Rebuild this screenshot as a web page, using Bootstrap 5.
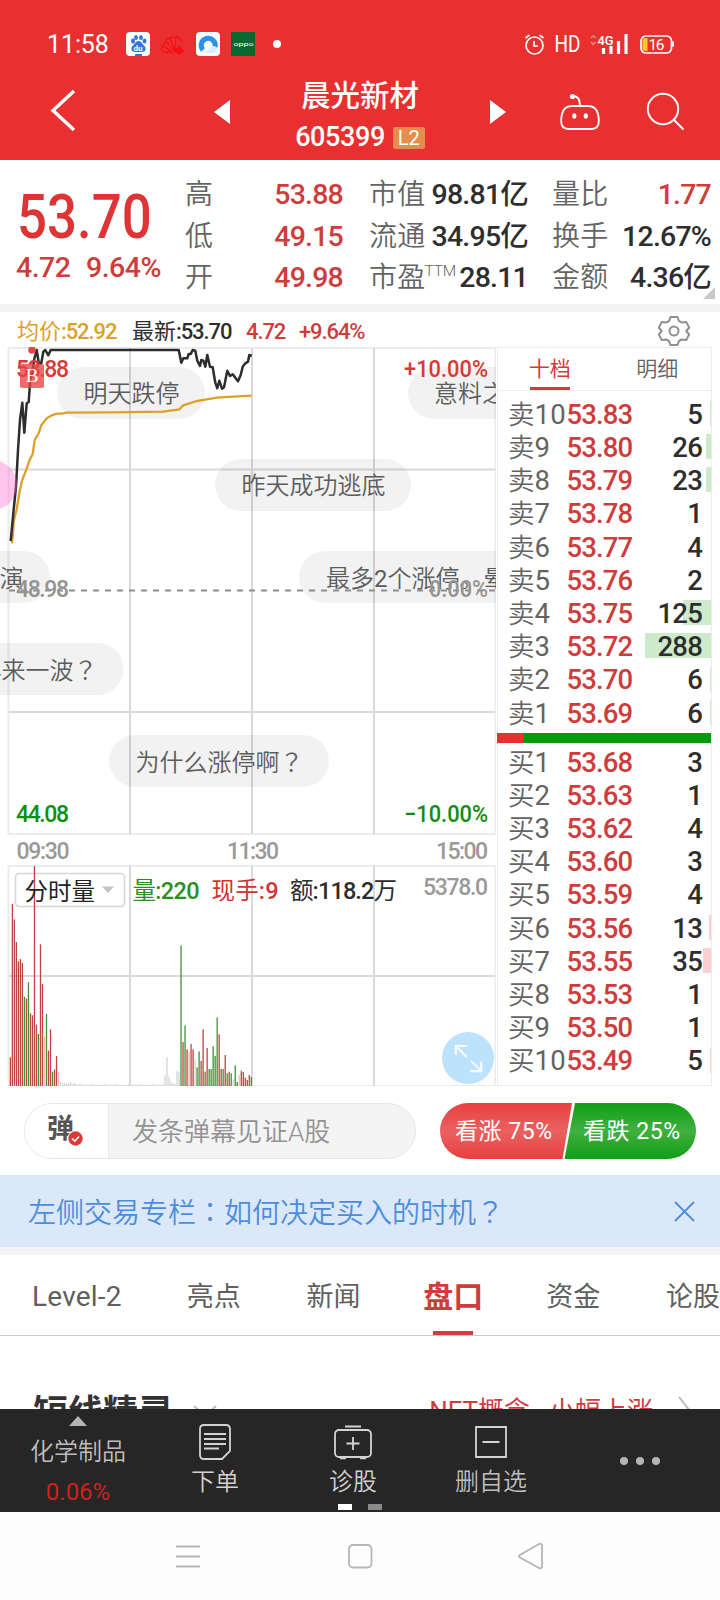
<!DOCTYPE html>
<html lang="zh-CN">
<head>
<meta charset="utf-8">
<meta name="viewport" content="width=device-width, initial-scale=1">
<title>晨光新材 605399</title>
<link rel="stylesheet" href="https://cdn.jsdelivr.net/npm/bootstrap@5.3.0/dist/css/bootstrap.min.css">
<style>
:root{--up:#cf3c3c;--ink:#2e2e2e;--dim:#636363;}
body{width:720px;height:1600px;overflow:hidden;background:#fff;color:var(--ink);font-family:Roboto,"Noto Sans CJK SC",sans-serif;line-height:1;white-space:nowrap}
svg{display:block;flex:none}
.up{color:var(--up)} .dim{color:var(--dim)}
.punct{font-family:"Noto Sans CJK TC",sans-serif}
.topbar{height:160px;background:#e83030;color:#fff}
.statusbar{height:88px;padding:0 45px 0 47px}
.clock{font-size:25px;font-weight:400;width:79px;letter-spacing:-.1px}
.titlebar{height:72px}
.stock-name{font-size:29.5px;font-weight:500;line-height:32px}
.stock-code{font-size:27px;font-weight:500;letter-spacing:-.4px}
.tag-l2{background:#e58d4c;width:32px;height:22px;font-size:20px;border-radius:2px;line-height:23px;text-align:center}
.quote{height:144px;padding:14px 9px 6px 17px}
.last-price{font-size:61px;font-weight:500;transform:scaleX(.865);transform-origin:left;color:#dd3535;height:56px;line-height:60px;margin:13px 0 0 0}
.delta{font-size:28.5px;letter-spacing:-.5px;font-weight:500;height:40px;line-height:40px;margin:5px 0 0 -1px}
.qcol{height:124px}
.qcol>div{height:41.7px;font-size:28.5px;line-height:41.7px;font-weight:500;letter-spacing:-.8px}
.qcol .dim{font-weight:350;letter-spacing:.3px;font-size:28px}
.qcol .ttm{font-size:15.500px;font-weight:300;line-height:16px;letter-spacing:-.3px;margin:6px auto 0 -1px}
.band{height:8px;background:#f4f4f4}
.avg{height:35px;padding:4px 30px 0 17px;font-size:22px;font-weight:500;letter-spacing:-1.1px}
.avg .cj{font-weight:400;letter-spacing:0}
.board{height:739px}
.orders{width:215px;margin-left:1px;border:1px solid #ececec}
.otabs{height:43px;font-size:21px;border-bottom:1px solid #ececec;font-weight:350}
.otabs>div{flex:1;text-align:center;line-height:43px}
.otabs .on{color:var(--up);font-weight:400}
.otabs .on::after{content:"";display:block;width:40px;height:3px;margin:-4px auto 0;background:var(--up)}
.orow{height:33.2px;padding:2px 9px 0 10px;font-size:27.5px}
.orow .lb{width:58.5px;color:var(--dim);font-weight:400;letter-spacing:.1px}
.orow .lb i{font-style:normal;font-size:26.500px;font-weight:350}
.orow .pr{color:var(--up);font-weight:500;letter-spacing:-.9px}
.orow .qt{font-weight:500;letter-spacing:-.8px}
.balance{height:10px;margin:4px 0 2px -1px}
.talk{height:89px;padding:17px 23px 0 24px}
.pill{width:392px;height:56px;border:1px solid #e8e8e8;border-radius:28px;background:#f4f4f4;overflow:hidden}
.pill .dan{width:84px;background:#fff;border-right:1px solid #e8e8e8;padding-left:22px;font-size:27px;font-weight:700;color:#555}
.pill .ph{font-size:26px;font-weight:350;color:#929292;padding:2px 0 0 23px}
.vote{width:257px;height:56px;color:#fff;font-size:22.5px}
.notice{height:72px;background:#dbe8fa;color:#4b8ddd;font-size:28px;font-weight:350;padding:0 25px 0 28px}
.tabs{height:81px;border-bottom:1px solid #c9c9c9;font-size:27px;color:#606060;padding-left:32px;overflow:hidden}
.tabs>div{line-height:84px}
.tabs .on{font-size:30px;font-weight:700;color:var(--up)}
.tabs .on::after{content:"";display:block;width:40px;height:4px;margin:-8px auto 0;background:var(--up)}
.spirit{height:73px;overflow:hidden;padding:52px 25px 0 33px}
.spirit h2{font-size:35px;font-weight:700;line-height:40px;margin:6px 0 0;color:#333}
.spirit .more{font-size:26px;line-height:44px;margin-top:1px;color:var(--up)}
.dock{height:103px;background:#262626;color:#bdbdbd;font-size:24px;font-weight:350;overflow:hidden}
.dock .cell{width:138px;height:103px;flex:none}
.sysnav{height:88px;background:#fdfdfd}
</style>
</head>
<body>
<header class="topbar">
  <div class="statusbar d-flex align-items-center">
    <span class="clock">11:58</span>
    <svg width="165" height="30" viewBox="126 29 165 30">
      <rect x="126" y="32" width="24" height="24" rx="4" fill="#fff"/>
      <g fill="#3274dc"><ellipse cx="133" cy="41" rx="2" ry="2.7"/><ellipse cx="136" cy="37.500" rx="1.900" ry="2.500"/><ellipse cx="141" cy="37.500" rx="1.900" ry="2.500"/><ellipse cx="144.500" cy="41" rx="2" ry="2.600"/><path d="M138.500 41c3 0 3.500 3 6 5 2.500 3 .5 6-2.500 6h-7c-3 0-5-3-2.500-6 2.500-2 3-5 6-5z"/><path d="M135 54h7v2h-7z"/></g>
      <text x="133.500" y="50.500" font-size="8" font-weight="700" fill="#fff">du</text>
      <g fill="none" stroke="#fa0d12" stroke-width="1.200"><path d="M168 53c-8-1-8-6-4-8 2-9 15-11 18-3M163 46l10 7M166 41l8 10M170 38l5 13M176 37l-1 13M164 52h8"/></g>
      <path d="M179.500 45c1 3 4.500 4 4 7-.5 2-3 1.500-3.500.5l1 2h-4l1-2c-1 1-3.500 1-3.500-1 0-3 4-4 5-6.500z" fill="#fa0d12"/>
      <rect x="196" y="32" width="24" height="24" rx="4" fill="#f7fafc"/>
      <path d="M203 50a7 7 0 1 1 12-3" fill="none" stroke="#2b91e8" stroke-width="5"/>
      <path d="M204 53c4 0 5-7 9-7 5 0 6 7 1 7z" fill="#dbeefb"/>
      <rect x="231" y="32" width="24" height="24" fill="#08692e"/>
      <text x="233.500" y="45.500" font-size="5.800" textLength="20" lengthAdjust="spacingAndGlyphs" fill="#fff">oppo</text>
      <circle cx="277" cy="44" r="4" fill="#fff"/>
    </svg>
    <svg class="ms-auto" width="152" height="30" viewBox="523 29 152 30" fill="none" stroke="#fff" stroke-width="1.700">
      <circle cx="534.500" cy="45.500" r="8.500"/><path d="M534 41v5h4M525.500 38l4-3M543.500 38l-4-3"/>
      <text x="554.500" y="52" font-size="23" font-weight="400" textLength="26" lengthAdjust="spacingAndGlyphs" fill="#fff" stroke="none">HD</text>
      <path d="M591 38l2.300-2.300 2.300 2.300M591 42l2.300 2.300 2.300-2.300" stroke="#f18080"/>
      <text x="597.500" y="45" font-size="13" font-weight="500" textLength="16" lengthAdjust="spacingAndGlyphs" fill="#fff" stroke="none">4G</text>
      <path d="M603.500 48v6M611 46v8M618.500 41v13M626 34v20" stroke-width="3.200"/>
      <rect x="641" y="36" width="30.500" height="17" rx="5"/><path d="M673 41.500v5" stroke-width="2"/>
      <path d="M647.500 38h-2q-3 0-3 3v7q0 3 3 3h2z" fill="#ffc928" stroke="none"/>
      <text x="648.500" y="49.500" font-size="15.500" textLength="16" fill="#fff" stroke="none">16</text>
    </svg>
  </div>
  <div class="titlebar d-flex">
    <svg width="290" height="72" viewBox="0 88 290 72"><path d="M74 91L53 110.500l21 19.500" fill="none" stroke="#fff" stroke-width="3.400"/><path d="M214 112l16-12v24z" fill="#fff"/></svg>
    <div class="d-flex flex-column align-items-center" style="width:140px;margin-top:-8px">
      <div class="stock-name">晨光新材</div>
      <div class="d-flex align-items-center gap-2 mt-2 pt-1"><span class="stock-code">605399</span><span class="tag-l2">L2</span></div>
    </div>
    <svg width="290" height="72" viewBox="430 88 290 72" fill="none" stroke="#fff" stroke-width="1.900">
      <path d="M506 112l-16-12v24z" fill="#fff" stroke="none"/>
      <path d="M572 106h16q8 0 10 8 1.500 6 .5 10-1.500 5-7 5h-23q-5.500 0-7-5-1-4 .5-10 2-8 10-8z"/><path d="M573 96c5 0 7 3 7 10"/>
      <circle cx="572.500" cy="96.500" r="2.600" fill="#fff" stroke="none"/><ellipse cx="574.300" cy="116" rx="2.100" ry="2.800" fill="#fff" stroke="none"/><ellipse cx="585.800" cy="116" rx="2.100" ry="2.800" fill="#fff" stroke="none"/>
      <circle cx="663" cy="109" r="15.200"/><path d="M674 120l9.500 9.500"/>
    </svg>
  </div>
</header>

<section class="quote d-flex position-relative">
  <div style="width:168px">
    <div class="last-price">53.70</div>
    <div class="delta up d-flex"><span style="width:70px">4.72</span><span>9.64%</span></div>
  </div>
  <div class="qcol" style="width:158px">
    <div class="d-flex justify-content-between up"><span class="dim">高</span>53.88</div>
    <div class="d-flex justify-content-between up"><span class="dim">低</span>49.15</div>
    <div class="d-flex justify-content-between up"><span class="dim">开</span>49.98</div>
  </div>
  <div class="qcol" style="width:159px;margin-left:26px">
    <div class="d-flex justify-content-between"><span class="dim">市值</span>98.81亿</div>
    <div class="d-flex justify-content-between"><span class="dim">流通</span>34.95亿</div>
    <div class="d-flex justify-content-between"><span class="dim">市盈</span><span class="dim ttm">TTM</span>28.11</div>
  </div>
  <div class="qcol" style="width:159px;margin-left:24px">
    <div class="d-flex justify-content-between up"><span class="dim">量比</span>1.77</div>
    <div class="d-flex justify-content-between"><span class="dim">换手</span>12.67%</div>
    <div class="d-flex justify-content-between"><span class="dim">金额</span>4.36亿</div>
  </div>
  <svg class="position-absolute" style="right:5px;bottom:5px" width="12" height="12"><path d="M12 0v12H0z" fill="#c8c8c8"/></svg>
</section>
<div class="band"></div>

<div class="avg d-flex align-items-center">
  <span style="width:115px;color:#dda126"><span class="cj">均价</span>:52.92</span>
  <span style="width:114px"><span class="cj">最新</span>:53.70</span>
  <span class="up" style="width:53px">4.72</span><span class="up">+9.64%</span>
  <svg class="ms-auto" width="32" height="32" viewBox="-16 -15 32 32" fill="none" stroke="#8f8f8f" stroke-width="2" stroke-linejoin="round"><circle r="4.500"/><path d="M-3.500-14h7l1.500 4 3 1.600 4.200-.7 3 5.600L12.300 0l2.900 3.500-3 5.600-4.200-.7L5 10l-1.500 4h-7L-5 10l-3-1.600-4.200.7-3-5.600L-12.300 0l-2.900-3.500 3-5.600 4.200.7L-5-10z"/></svg>
</div>

<div class="board d-flex">
  <svg width="496" height="739" viewBox="0 347 496 739" font-weight="500">
    <g fill="none" stroke="#ececec" stroke-width="2"><rect x="8.500" y="348" width="487" height="486"/><rect x="8.500" y="866" width="487" height="220"/></g>
    <path d="M130 348v486M252 348v486M374 348v486M9 469.500h486M9 712h486M130 866v220M252 866v220M374 866v220M9 976h486" stroke="#d9d9d9" stroke-width="2"/>
    <g fill="#000" fill-opacity=".052">
      <rect x="57" y="367" width="148" height="52" rx="26"/><rect x="408" y="367" width="148" height="52" rx="26"/>
      <rect x="215" y="459" width="196" height="52" rx="26"/><rect x="299" y="551" width="260" height="52" rx="26"/>
      <rect x="-60" y="551" width="110" height="52" rx="26"/><rect x="-60" y="643" width="183.500" height="52" rx="26"/>
      <rect x="109" y="735" width="220" height="52" rx="26"/>
    </g>
    <path d="M9 590.500h487" stroke="#8d8d8d" stroke-width="1.800" stroke-dasharray="6 6"/>
    <path id="avgLine" fill="none" stroke="#dba12a" stroke-width="2.300"/>
    <path id="priceLine" fill="none" stroke="#2d2d2d" stroke-width="2.500" stroke-linejoin="round"/>
    <circle cx="-8" cy="485" r="25" fill="#f6c" fill-opacity=".38"/>
    <g font-size="24" font-weight="350" fill="#5c5c5c">
      <text x="83.500" y="402">明天跌停</text><text x="434" y="402">意料之中</text><text x="241.500" y="494">昨天成功逃底</text>
      <text x="326" y="586.500">最多<tspan font-weight="400">2</tspan>个涨停。晕</text><text x="23.500" y="586.500" text-anchor="end">表演</text><text x="97.500" y="678.500" text-anchor="end">再来一波<tspan class="punct" lang="zh-TW">？</tspan></text><text x="135.500" y="770.500">为什么涨停啊<tspan class="punct" lang="zh-TW">？</tspan></text>
    </g>
    <g font-size="23">
      <g fill="#d83a3a"><text x="16" y="377" textLength="53">53.88</text><text x="404" y="377" textLength="84" lengthAdjust="spacingAndGlyphs">+10.00%</text></g>
      <g fill="#949494"><text x="16" y="597" textLength="53">48.98</text><text x="429" y="597" textLength="59" lengthAdjust="spacingAndGlyphs">0.00%</text></g>
      <g fill="#0f8f12"><text x="16" y="822" textLength="53">44.08</text><text x="404" y="822" textLength="84" lengthAdjust="spacingAndGlyphs">−10.00%</text></g>
      <g fill="#999"><text x="16.500" y="859" textLength="53">09:30</text><text x="227" y="859" textLength="52">11:30</text><text x="436" y="859" textLength="52">15:00</text><text x="423" y="895" textLength="65">5378.0</text></g>
    </g>
    <circle cx="32" cy="350" r="3.800" fill="#e34747"/><rect x="20" y="364" width="24" height="24" rx="2" fill="#ec4141" fill-opacity=".78"/>
    <text x="32" y="382" font-family="Liberation Serif, serif" font-size="19" font-weight="400" text-anchor="middle" fill="#fff">B</text>
    <rect x="15.500" y="873.500" width="109" height="33" rx="4" fill="#fff" stroke="#d6d6d6" stroke-width="1.600"/>
    <g id="volume"></g>
    <path d="M102 886.500h12l-6 6.500z" fill="#c4c4c4"/>
    <g font-size="23.500" font-weight="400">
      <text x="24.500" y="899.500" fill="#222">分时量</text>
      <text x="132.500" y="899" fill="#2b8f1e" textLength="67">量<tspan font-weight="500">:220</tspan></text>
      <text x="211.500" y="899" fill="#d03434" textLength="67">现手<tspan font-weight="500">:9</tspan></text>
      <text x="290" y="899" fill="#2d2d2d" textLength="107">额<tspan font-weight="500">:118.2</tspan>万</text>
    </g>
    <circle cx="468" cy="1058" r="26" fill="#bde2fe"/>
    <path d="M467 1057l-11-10.500M455.800 1055v-9h11.500M471 1061l10.500 10M470 1071.200h11.200v-9.500" fill="none" stroke="#fff" stroke-opacity=".85" stroke-width="2.200"/>
  </svg>
  <div class="orders">
    <div class="otabs d-flex"><div class="on" style="margin-left:-2px">十档</div><div class="dim">明细</div></div>
    <div id="asks" style="padding-top:6px"></div>
    <div class="balance d-flex"><div style="width:27px;background:#e83030"></div><div class="flex-fill" style="background:#069a0a"></div></div>
    <div id="bids"></div>
  </div>
</div>

<div class="talk d-flex justify-content-between">
  <div class="pill d-flex">
    <div class="dan d-flex align-items-center position-relative"><span style="margin-top:-3px">弹</span>
      <svg class="position-absolute" style="left:42px;top:26px" width="17" height="17"><circle cx="8.500" cy="8.500" r="8" fill="#fff"/><circle cx="8.500" cy="8.500" r="7.200" fill="#da3c35"/><path d="M5 8.500l2.800 2.700L12 6.500" fill="none" stroke="#fff" stroke-width="1.600"/></svg>
    </div>
    <div class="ph d-flex align-items-center">发条弹幕见证A股</div>
  </div>
  <svg class="vote" viewBox="440 1103 257 56">
    <defs><linearGradient id="r" x2="0" y2="1"><stop stop-color="#ea3f3f"/><stop offset=".5" stop-color="#ea6161"/><stop offset="1" stop-color="#ea3f3f"/></linearGradient><linearGradient id="g" x2="0" y2="1"><stop stop-color="#119e14"/><stop offset=".5" stop-color="#40b040"/><stop offset="1" stop-color="#119e14"/></linearGradient></defs>
    <path d="M468 1103h104l-9.500 56H468a28 28 0 0 1 0-56z" fill="url(#r)"/><path d="M575 1103h93a28 28 0 0 1 0 56H564.500z" fill="url(#g)"/>
    <g fill="#fff"><text x="455" y="1139" font-size="23" textLength="97">看涨 75%</text><text x="583" y="1139" font-size="23" textLength="97">看跌 25%</text></g>
  </svg>
</div>

<div class="notice d-flex align-items-center justify-content-between">
  <span style="padding-top:2px">左侧交易专栏<span class="punct" lang="zh-TW">：</span>如何决定买入的时机<span class="punct" lang="zh-TW">？</span></span>
  <svg width="21" height="21" fill="none" stroke="#4b8ddd" stroke-width="1.800"><path d="M1 1l19 19M20 1L1 20"/></svg>
</div>
<div class="band"></div>
<nav class="tabs d-flex">
  <div style="width:155px;font-size:28px;letter-spacing:.2px">Level-2</div><div style="width:120px">亮点</div><div style="width:117px">新闻</div><div class="on" style="width:60px">盘口</div><div style="width:120px;margin-left:63px">资金</div><div>论股</div>
</nav>
<div class="spirit d-flex">
  <h2>短线精灵</h2>
  <svg width="24" height="14" style="margin:16px 0 0 20px" fill="none" stroke="#bbb" stroke-width="2"><path d="M1 2l11 10L23 2"/></svg>
  <span class="more ms-auto">NFT概念</span><span class="more" style="margin-left:19px;margin-right:24px">小幅上涨</span>
  <svg width="18" height="32" style="margin-top:7px" fill="none" stroke="#bbb" stroke-width="2"><path d="M2 2l11 14L2 30"/></svg>
</div>

<div class="dock d-flex position-relative">
  <div class="cell text-center" style="width:156px;padding-top:7px">
    <svg class="mx-auto" width="18" height="10"><path d="M9 0l9 10H0z" fill="#b5b5b5"/></svg>
    <div style="margin-top:14px">化学制品</div><div style="margin-top:16px;color:#d0201f;font-weight:400">0.06%</div>
  </div>
  <div class="cell text-center" style="width:118px;padding-top:14px">
    <svg class="mx-auto" width="34" height="38" fill="none" stroke="#d3d3d3" stroke-width="1.800"><path d="M6 2h22q4 0 4 4v22l-8 8H6q-4 0-4-4V6q0-4 4-4zM6 11h22M6 16h22M6 21h22M6 25.500h15"/></svg>
    <div style="margin-top:9px;color:#d0d0d0">下单</div>
  </div>
  <div class="cell text-center" style="width:158px;padding-top:14px">
    <svg class="mx-auto" width="40" height="38" fill="none" stroke="#d3d3d3" stroke-width="1.800"><rect x="2" y="7" width="36" height="27" rx="4"/><path d="M12 3.500h16M20 14v13M13.500 20.500h13"/><path d="M7 35h6M27 35h6" stroke-width="2.600"/></svg>
    <div style="margin-top:9px;color:#d0d0d0">诊股</div>
  </div>
  <div class="cell text-center" style="width:118px;padding-top:14px">
    <svg class="mx-auto" width="34" height="38" fill="none" stroke="#d3d3d3" stroke-width="1.800"><path d="M2 4h30v30H2zM8.500 19h17"/></svg>
    <div style="margin-top:9px">删自选</div>
  </div>
  <div class="cell d-flex align-items-center ps-5" style="width:170px"><svg width="84" height="8" viewBox="-22 0 84 8" fill="#b5b5b5"><circle cx="4" cy="4" r="4"/><circle cx="20" cy="4" r="4"/><circle cx="36" cy="4" r="4"/></svg></div>
  <svg class="position-absolute" style="left:338px;bottom:2px" width="44" height="6"><path d="M0 0h14v6H0z" fill="#fff"/><path d="M30 0h14v6H30z" fill="#8b8b8b"/></svg>
</div>
<div class="sysnav">
  <svg width="720" height="88" viewBox="0 1512 720 88" fill="none" stroke="#b5b5b5" stroke-width="1.800"><path d="M176 1546.500h24M176 1556.500h24M176 1566.500h24"/><rect x="349" y="1545" width="22.500" height="22.500" rx="4"/><path d="M520 1555l19-11q3-1 3 2v20q0 3-3 2l-19-10.500q-2-1.500 0-2.500z"/></svg>
</div>

<script>
const line = s => 'M' + s.trim().split(/\s+/).map(p => { const [x, y] = p.split(','); return (x / 3).toFixed(1) + ' ' + (y / 3 + 340).toFixed(1); }).join('L');
document.getElementById('priceLine').setAttribute('d', line('32,603 40,520 48,440 54,330 60,240 67,188 73,278 80,190 86,186 92,100 96,110 102,60 110,30 116,68 124,70 130,35 136,30 145,46 152,30 536,30 544,68 550,55 562,55 566,42 572,42 578,30 586,32 592,62 600,78 604,60 610,62 616,80 622,45 630,80 638,82 646,128 652,145 658,122 666,146 672,142 682,92 690,108 698,103 714,124 722,105 728,80 736,70 744,65 748,45 755,48'));
document.getElementById('avgLine').setAttribute('d', line('36,610 42,540 50,508 58,460 66,422 80,386 88,362 98,342 104,300 116,280 124,256 140,235 155,226 170,221 185,221 200,218 330,217 490,215 538,208 550,196 590,183 650,173 700,170 755,167'));

// volume per minute: colour key + height in thirds of a pixel
const early = 'r86 r546 r500 r432 r374 r381 r369 g268 r263 g311 r218 r212 r660 r184 g156 r425 r306 p148 g216 r106 r170 g43 r50 r90 p43 n13 n8 n10 n6 n9 n12 n6 n9 n4 n5 n6'.split(' ');
const late = 'n6 n32 n87 n28 n12 n8 n6 n45 n42 g422 r132 g182 r110 p103 r126 r110 n80 g56 g104 r75 r170 g43 r114 g51 g51 g119 g90 g206 r155 r51 g51 r93 g38 r43 g38 n20 g62 g12 p33 r46 r42 r25 r18 r33 g27'.split(' ');
const mid = Array.from({length: 121 - early.length - late.length}, (_, i) => 'n' + [4, 3, 5, 3, 4, 6][i % 6]);
const tint = {r: '#bd4545', g: '#3d9438', p: '#f3b9b9', n: '#d5d5d5'};
document.getElementById('volume').innerHTML = early.concat(mid, late).map((b, i) => {
  const h = b.slice(1) / 3;
  return `<rect x="${(9.7 + i * 2.008).toFixed(2)}" y="${1086 - h}" width="1.3" height="${h}" fill="${tint[b[0]]}"/>`;
}).join('');

const rows = (id, side, data, tone) => document.getElementById(id).innerHTML = data.map(([n, p, q, w]) =>
  `<div class="orow d-flex align-items-center" style="background:linear-gradient(${tone},${tone}) right center/${w}px 25px no-repeat"><span class="lb"><i>${side}</i>${n}</span><span class="pr">${p}</span><span class="qt ms-auto">${q}</span></div>`).join('');
rows('asks', '卖', [[10,'53.83',5,1],[9,'53.80',26,5],[8,'53.79',23,5],[7,'53.78',1,0],[6,'53.77',4,0],[5,'53.76',2,0],[4,'53.75',125,28],[3,'53.72',288,66],[2,'53.70',6,1],[1,'53.69',6,1]], '#cdeacb');
rows('bids', '买', [[1,'53.68',3,0],[2,'53.63',1,0],[3,'53.62',4,0],[4,'53.60',3,0],[5,'53.59',4,0],[6,'53.56',13,2],[7,'53.55',35,8],[8,'53.53',1,0],[9,'53.50',1,0],[10,'53.49',5,1]], '#fbd0d0');
</script>
<script src="https://cdn.jsdelivr.net/npm/bootstrap@5.3.0/dist/js/bootstrap.bundle.min.js"></script>
</body>
</html>
